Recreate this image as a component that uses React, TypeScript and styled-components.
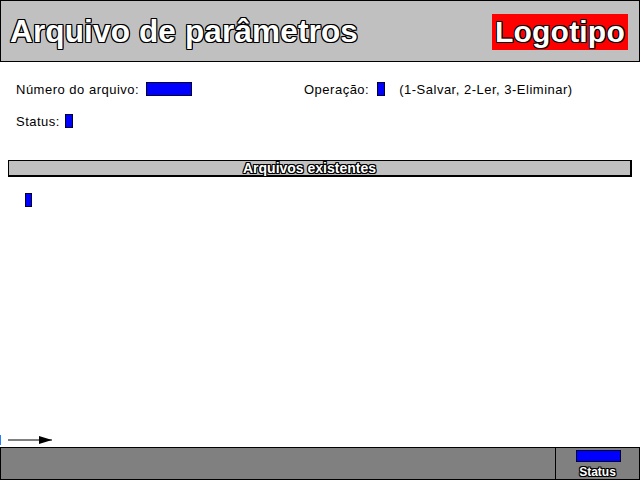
import React from "react";
import styled, { createGlobalStyle } from "styled-components";

const Global = createGlobalStyle`
  html, body { margin: 0; padding: 0; background: #fff; }
  body { font-family: "Liberation Sans", Arial, sans-serif; }
`;

const outline = `
  text-shadow:
    -1px -1px 0 #000, 0 -1px 0 #000, 1px -1px 0 #000,
    -1px 0 0 #000, 1px 0 0 #000,
    -1px 1px 0 #000, 0 1px 0 #000, 1px 1px 0 #000;
`;

const Screen = styled.div`
  width: 640px;
  height: 480px;
  display: flex;
  flex-direction: column;
  overflow: hidden;
  background: #fff;
`;

const Header = styled.header`
  height: 62px;
  box-sizing: border-box;
  border: 1px solid #000;
  background: #c0c0c0;
  display: flex;
  align-items: center;
  justify-content: space-between;
  padding: 0 11px 0 9px;
`;

const Title = styled.h1`
  margin: 0;
  font-size: 31.5px;
  letter-spacing: 0.15px;
  font-weight: bold;
  color: #fff;
  ${outline}
`;

const Logo = styled.div`
  width: 136px;
  height: 36px;
  margin-top: 2px;
  background: #ff0000;
  color: #fff;
  font-size: 30px;
  letter-spacing: 0.2px;
  font-weight: bold;
  display: flex;
  align-items: center;
  justify-content: center;
  ${outline}
`;

const Content = styled.main`
  flex: 1;
  display: flex;
  flex-direction: column;
`;

const Form = styled.section`
  display: flex;
  flex-direction: column;
  gap: 18px;
  padding: 20px 0 0 16px;
`;

const Row = styled.div`
  display: flex;
  align-items: center;
  height: 14px;
`;

const Field = styled.div<{ $width?: number; $gap?: number }>`
  display: flex;
  align-items: center;
  gap: ${(p) => p.$gap ?? 8}px;
  width: ${(p) => (p.$width ? `${p.$width}px` : "auto")};
  font-size: 13px;
  letter-spacing: 0.5px;
  color: #000;
`;

const Value = styled.div<{ $w: number }>`
  width: ${(p) => p.$w}px;
  height: 14px;
  box-sizing: border-box;
  background: #0000ff;
  border: 1px solid #000033;
`;

const Hint = styled.span`
  margin-left: 6px;
`;

const SectionBar = styled.div`
  margin: 32px 8px 0 8px;
  height: 17px;
  box-sizing: border-box;
  border: 1px solid #000;
  border-width: 1px 2px 2px 1px;
  background: #c0c0c0;
  color: #fff;
  font-size: 14px;
  font-weight: bold;
  text-align: center;
  line-height: 14px;
  padding-right: 20px;
  ${outline}
`;

const List = styled.div`
  padding: 16px 0 0 25px;
`;

const Arrow = styled.div`
  margin-top: auto;
  margin-bottom: 2px;
  height: 10px;
  display: flex;
  align-items: center;
`;

const Footer = styled.footer`
  height: 33px;
  box-sizing: border-box;
  border: 1px solid #000;
  background: #808080;
  display: flex;
`;

const FooterSpace = styled.div`
  flex: 1;
`;

const StatusCell = styled.div`
  width: 83px;
  border-left: 1px solid #000;
  display: flex;
  flex-direction: column;
  align-items: center;
  padding-top: 2px;
  gap: 3px;
  color: #fff;
  font-size: 12px;
  font-weight: bold;
  ${outline}
`;

const StatusBox = styled.div`
  width: 45px;
  height: 13px;
  margin-left: 2px;
  box-sizing: border-box;
  background: #0000ff;
  border: 1px solid #000033;
`;

export default function App() {
  return (
    <>
      <Global />
      <Screen>
        <Header>
          <Title>Arquivo de parâmetros</Title>
          <Logo>Logotipo</Logo>
        </Header>
        <Content>
          <Form>
            <Row>
              <Field $width={288} $gap={7}>
                Número do arquivo:
                <Value $w={46} />
              </Field>
              <Field>
                Operação:
                <Value $w={8} />
                <Hint>(1-Salvar, 2-Ler, 3-Eliminar)</Hint>
              </Field>
            </Row>
            <Row>
              <Field $gap={5}>
                Status:
                <Value $w={8} />
              </Field>
            </Row>
          </Form>
          <SectionBar>Arquivos existentes</SectionBar>
          <List>
            <Value $w={7} />
          </List>
          <Arrow>
            <svg width="56" height="10" viewBox="0 0 56 10">
              <rect x="0" y="0" width="1" height="10" fill="#2080ff" />
              <line x1="8" y1="5" x2="52" y2="5" stroke="#000" strokeWidth="1" />
              <polygon points="39,1 39,9 52,5" fill="#000" />
            </svg>
          </Arrow>
        </Content>
        <Footer>
          <FooterSpace />
          <StatusCell>
            <StatusBox />
            Status
          </StatusCell>
        </Footer>
      </Screen>
    </>
  );
}
